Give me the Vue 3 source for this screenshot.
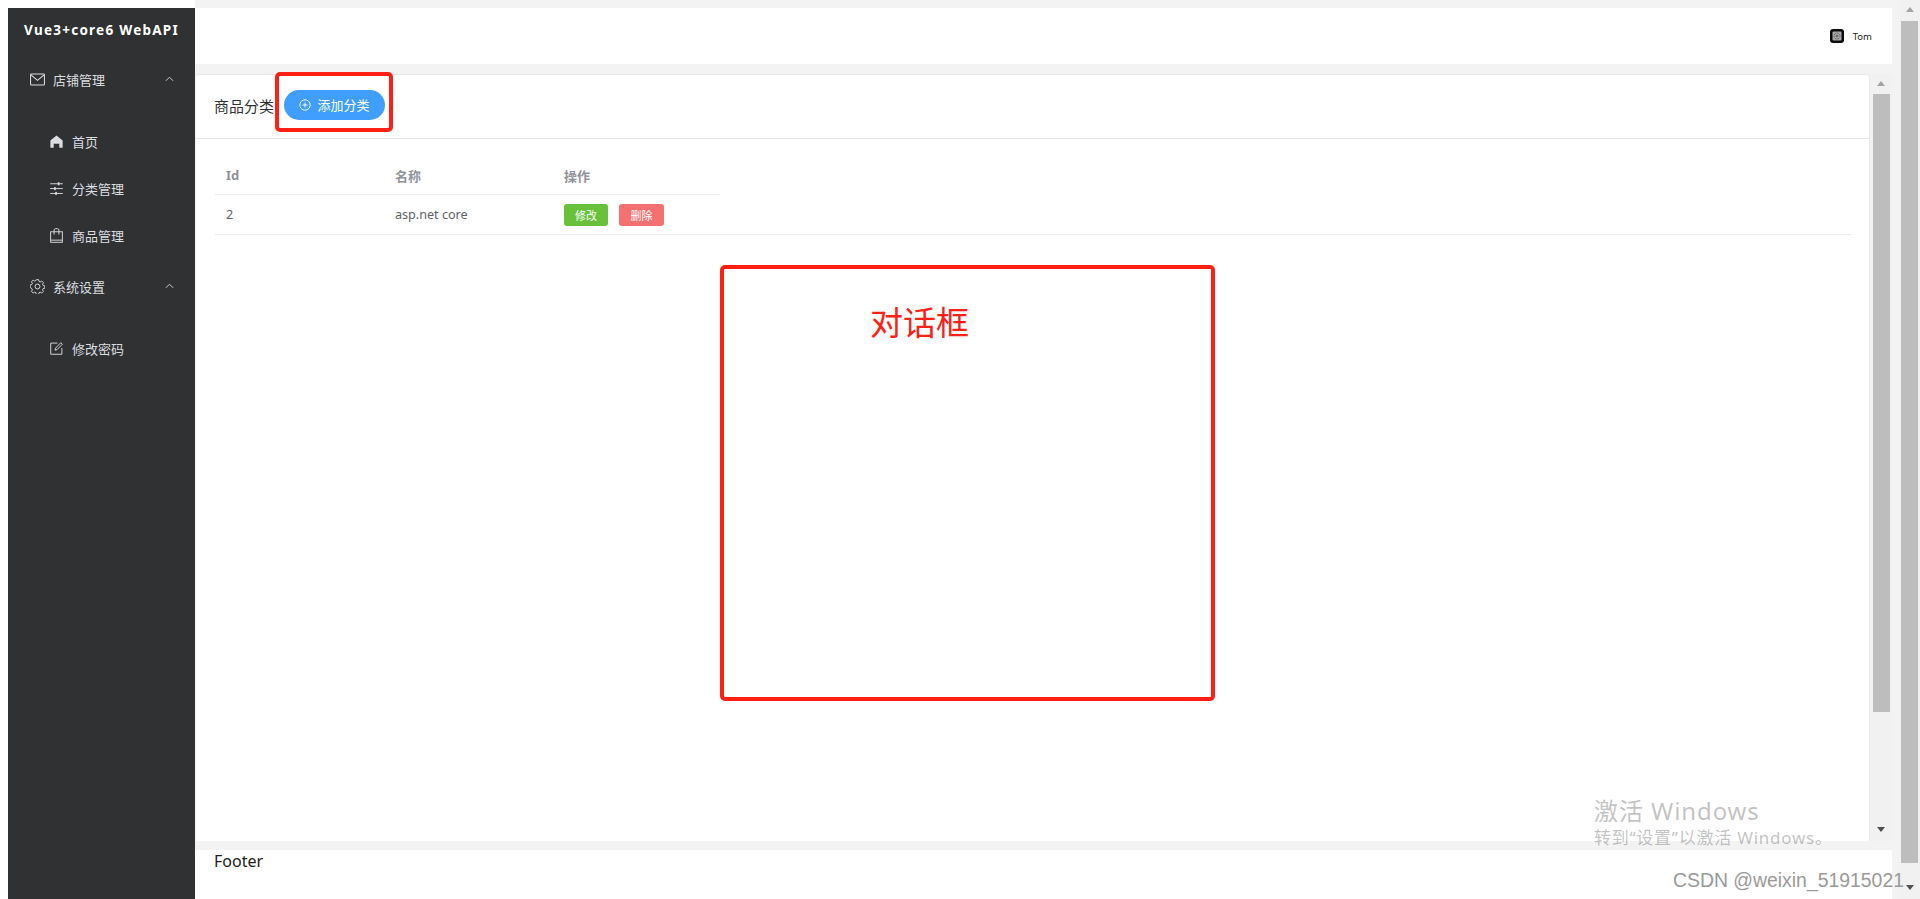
<script setup>
const group1 = [
  { key: 'home', label: '首页' },
  { key: 'sliders', label: '分类管理' },
  { key: 'bag', label: '商品管理' }
]
</script>

<template>
  <div class="root">
    <div class="page">
      <aside class="side">
        <div class="brand">Vue3+core6 WebAPI</div>

        <div class="menu-title">
          <svg class="ico-main" viewBox="0 0 16 16" fill="none" stroke="currentColor" stroke-width="1.1">
            <rect x="0.6" y="2.1" width="14.8" height="11.8" rx="0.8" />
            <path d="M1 3 8 9l7-6" />
          </svg>
          <span class="menu-text">店铺管理</span>
          <svg class="chev" viewBox="0 0 10 6" fill="none" stroke="currentColor" stroke-width="1"><path d="M1 5l4-4 4 4" /></svg>
        </div>
        <div class="sub">
          <div v-for="it in group1" :key="it.key" class="sub-item">
            <svg v-if="it.key === 'home'" class="ico-sub" viewBox="0 0 14 14" fill="currentColor">
              <path d="M7 .6 13.6 6v7.6H10V9.4H4v4.2H.4V6z" />
            </svg>
            <svg v-else-if="it.key === 'sliders'" class="ico-sub" viewBox="0 0 14 14" fill="currentColor">
              <rect x="0.2" y="1.4" width="13.6" height="1" />
              <rect x="0.2" y="6.6" width="13.6" height="1" />
              <rect x="0.2" y="11.8" width="13.6" height="1" />
              <rect x="8.4" y="0.3" width="1.8" height="3.2" />
              <rect x="4.4" y="5.5" width="1.8" height="3.2" />
              <rect x="5.6" y="10.7" width="1.8" height="3.2" />
            </svg>
            <svg v-else class="ico-sub ico-bag" viewBox="0 0 14 16" fill="none" stroke="currentColor" stroke-width="1">
              <rect x="0.7" y="4" width="12.6" height="11.3" />
              <path d="M4.4 7V2.2c0-.9.7-1.6 1.6-1.6h2c.9 0 1.6.7 1.6 1.6V7M.7 13h12.6" />
            </svg>
            <span class="sub-text">{{ it.label }}</span>
          </div>
        </div>

        <div class="menu-title">
          <svg class="ico-main" viewBox="0 0 16 16" fill="none" stroke="currentColor" stroke-width="1">
            <path d="M6.7.8h2.6l.4 1.9 1.3.6 1.7-1 1.8 1.9-1 1.6.6 1.3 1.9.5v2.6l-1.9.4-.6 1.4 1 1.6-1.8 1.8-1.7-1-1.3.6-.4 1.9H6.7l-.4-1.9-1.3-.6-1.7 1-1.8-1.8 1-1.6-.6-1.4L0 9.2V6.6l1.9-.5.6-1.3-1-1.6 1.8-1.9 1.7 1 1.3-.6z" transform="translate(0.1 -0.1) scale(0.98)" />
            <circle cx="8" cy="8" r="2.6" />
          </svg>
          <span class="menu-text">系统设置</span>
          <svg class="chev" viewBox="0 0 10 6" fill="none" stroke="currentColor" stroke-width="1"><path d="M1 5l4-4 4 4" /></svg>
        </div>
        <div class="sub">
          <div class="sub-item">
            <svg class="ico-sub" viewBox="0 0 14 14" fill="none" stroke="currentColor" stroke-width="1">
              <path d="M8 1.2H.8v12h12V6.4" />
              <path d="M5.4 8.8 6 6.6 11.6.8l1.7 1.6L7.6 8.2z" />
            </svg>
            <span class="sub-text">修改密码</span>
          </div>
        </div>
      </aside>

      <div class="main">
        <header class="head">
          <svg class="avatar" viewBox="0 0 14 14">
            <rect width="14" height="14" rx="3" fill="#0b0b0b" />
            <rect x="2.5" y="2.5" width="9" height="9" rx="1" fill="#a9a9a9" />
            <circle cx="7" cy="7" r="3" fill="none" stroke="#303030" stroke-width="0.8" stroke-dasharray="1 1" />
            <circle cx="7" cy="7" r="1.3" fill="#555" />
            <circle cx="7" cy="7" r="0.6" fill="#bbbbbb" />
          </svg>
          <span class="user">Tom</span>
        </header>

        <div class="mid">
          <section class="card">
            <div class="card-head">
              <span class="card-title">商品分类</span>
              <button class="add">
                <svg class="add-ico" viewBox="0 0 12 12" fill="none" stroke="currentColor" stroke-width="0.9">
                  <circle cx="6" cy="6" r="5.2" />
                  <path d="M3.6 6h4.8M6 3.6v4.8" />
                </svg>
                添加分类
              </button>
            </div>
            <div class="card-body">
              <div class="t-row t-head">
                <div class="c">Id</div>
                <div class="c">名称</div>
                <div class="c">操作</div>
              </div>
              <div class="t-row t-data">
                <div class="c">2</div>
                <div class="c">asp.net core</div>
                <div class="c ops">
                  <button class="mini ok">修改</button>
                  <button class="mini del">删除</button>
                </div>
              </div>
            </div>
          </section>
          <div class="bar bar-inner">
            <i class="arr up"></i>
            <div class="thumb thumb-inner"></div>
            <i class="arr down"></i>
          </div>
        </div>

        <footer class="foot">Footer</footer>
      </div>
    </div>

    <div class="bar bar-outer">
      <i class="arr up"></i>
      <div class="thumb thumb-outer"></div>
      <i class="arr down"></i>
    </div>

    <div class="mark mark-btn"></div>
    <div class="mark mark-dialog"></div>
    <div class="mark-text">对话框</div>
    <div class="win">
      <div class="win-1">激活 Windows</div>
      <div class="win-2">转到“设置”以激活 Windows。</div>
    </div>
    <div class="csdn">CSDN @weixin_51915021</div>
  </div>
</template>

<style>
html, body { margin: 0; padding: 0; overflow: hidden; background: #fff; }
</style>

<style scoped>
.root {
  position: relative;
  display: flex;
  height: 899px;
  overflow: hidden;
  font-family: "Noto Sans", "Noto Sans CJK SC", sans-serif;
}
.page { flex: 1; display: flex; min-width: 0; padding-left: 8px; background: #fff; }
.side {
  width: 187px;
  margin-top: 8px;
  background: #303133;
  color: #dcdde0;
  flex-shrink: 0;
}
.brand {
  height: 44px;
  line-height: 44px;
  text-align: center;
  color: #fff;
  font-size: 13.5px;
  font-weight: 700;
  letter-spacing: 1.25px;
  white-space: nowrap;
}
.menu-title {
  height: 54px;
  display: flex;
  align-items: center;
  padding: 0 21px 0 22px;
  font-size: 13px;
}
.ico-main { width: 15px; height: 15px; flex-shrink: 0; }
.menu-text { margin-left: 8px; flex: 1; }
.chev { width: 9px; height: 6px; }
.sub { padding-top: 12px; }
.sub-item {
  height: 47px;
  display: flex;
  align-items: center;
  padding-left: 42px;
  font-size: 13px;
}
.ico-sub { width: 13px; height: 13px; flex-shrink: 0; }
.ico-bag { height: 15px; }
.sub-text { margin-left: 9px; }

.main {
  flex: 1;
  min-width: 0;
  display: flex;
  flex-direction: column;
  padding: 8px 8px 0 0;
  background: #f3f3f3;
}
.head {
  height: 56px;
  background: #fff;
  display: flex;
  align-items: center;
  justify-content: flex-end;
  padding-right: 20px;
  flex-shrink: 0;
}
.avatar { width: 14px; height: 14px; margin-right: 9px; }
.user { font-size: 9.5px; color: #222; }

.mid {
  height: 767px;
  margin-top: 10px;
  display: flex;
  flex-shrink: 0;
}
.card {
  flex: 1;
  min-width: 0;
  margin-left: 1px;
  background: #fff;
  border-radius: 4px 4px 0 0;
  border-top: 1px solid #e6e7eb;
  border-right: 1px solid #e6e7eb;
}
.card-head {
  height: 63px;
  display: flex;
  align-items: center;
  padding-left: 18px;
  border-bottom: 1px solid #e6e7eb;
  font-size: 14px;
  color: #303133;
}
.card-title { width: 70px; font-size: 15px; white-space: nowrap; margin-top: -2px; }
.add {
  width: 101px;
  height: 30px;
  border: 0;
  border-radius: 15px;
  background: #409eff;
  color: #fff;
  font: inherit;
  font-size: 13px;
  display: flex;
  align-items: center;
  justify-content: center;
  padding: 0;
  margin-top: -4px;
}
.add-ico { width: 12px; height: 12px; margin-right: 6px; }
.card-body { padding: 16px 18px 0 19px; }
.t-row { display: flex; color: #606266; font-size: 13px; }
.c { width: 169px; padding-left: 11px; box-sizing: border-box; display: flex; align-items: center; }
.t-head {
  width: 505px;
  height: 40px;
  padding-top: 1px;
  box-sizing: border-box;
  border-bottom: 1px solid #e9eaee;
  color: #909399;
  font-weight: 700;
}
.t-head .c { flex-shrink: 0; }
.t-data { height: 40px; box-sizing: border-box; border-bottom: 1px solid #e9eaee; font-size: 12.6px; }
.ops { width: auto; gap: 11px; }
.mini {
  height: 22px;
  border: 0;
  border-radius: 3px;
  color: #fff;
  font: inherit;
  font-size: 11px;
  padding: 0;
}
.ok { width: 44px; background: #67c23a; }
.del { width: 45px; background: #f56c6c; opacity: 0.96; }

.foot {
  height: 49px;
  margin-top: 9px;
  background: #fff;
  padding: 0 0 0 19px;
  font-size: 16px;
  color: #222;
  line-height: 22px;
  box-sizing: border-box;
}

.bar {
  position: relative;
  background: #f1f1f1;
  flex-shrink: 0;
  display: flex;
  flex-direction: column;
  align-items: center;
  box-sizing: border-box;
}
.bar-inner { width: 22px; }
.bar-outer { width: 20px; height: 899px; padding-right: 1px; }
.thumb { background: #bdbdbd; width: 17px; }
.thumb-inner { height: 618px; margin-top: 8px; }
.thumb-outer { height: 842px; margin-top: 9px; }
.arr { display: block; width: 0; height: 0; border-left: 4.5px solid transparent; border-right: 4.5px solid transparent; }
.up { border-bottom: 5px solid #a3a3a3; margin-top: 7px; }
.down { border-top: 5px solid #505050; margin-top: auto; margin-bottom: 9px; }

.mark {
  position: absolute;
  border: 4px solid #fe2015;
  border-radius: 5px;
  box-sizing: border-box;
}
.mark-btn { left: 275px; top: 72px; width: 118px; height: 60px; }
.mark-dialog { left: 720px; top: 265px; width: 495px; height: 436px; }
.mark-text {
  position: absolute;
  left: 870px;
  top: 299px;
  font-family: "Noto Sans CJK SC", sans-serif;
  font-size: 33px;
  line-height: 44px;
  color: #fe2015;
}
.win {
  position: absolute;
  left: 1594px;
  top: 795px;
  color: rgba(120, 120, 120, 0.45);
  white-space: nowrap;
  font-family: "Noto Sans", "Noto Sans CJK SC", sans-serif;
}
.win-1 { font-size: 24px; line-height: 32px; letter-spacing: 0.9px; }
.win-2 { font-size: 17px; line-height: 22px; letter-spacing: 0.75px; }
.csdn {
  position: absolute;
  left: 1673px;
  top: 868px;
  font-family: "Liberation Sans", sans-serif;
  font-size: 19.4px;
  line-height: 24px;
  color: #9a9a9a;
  white-space: nowrap;
}
</style>
